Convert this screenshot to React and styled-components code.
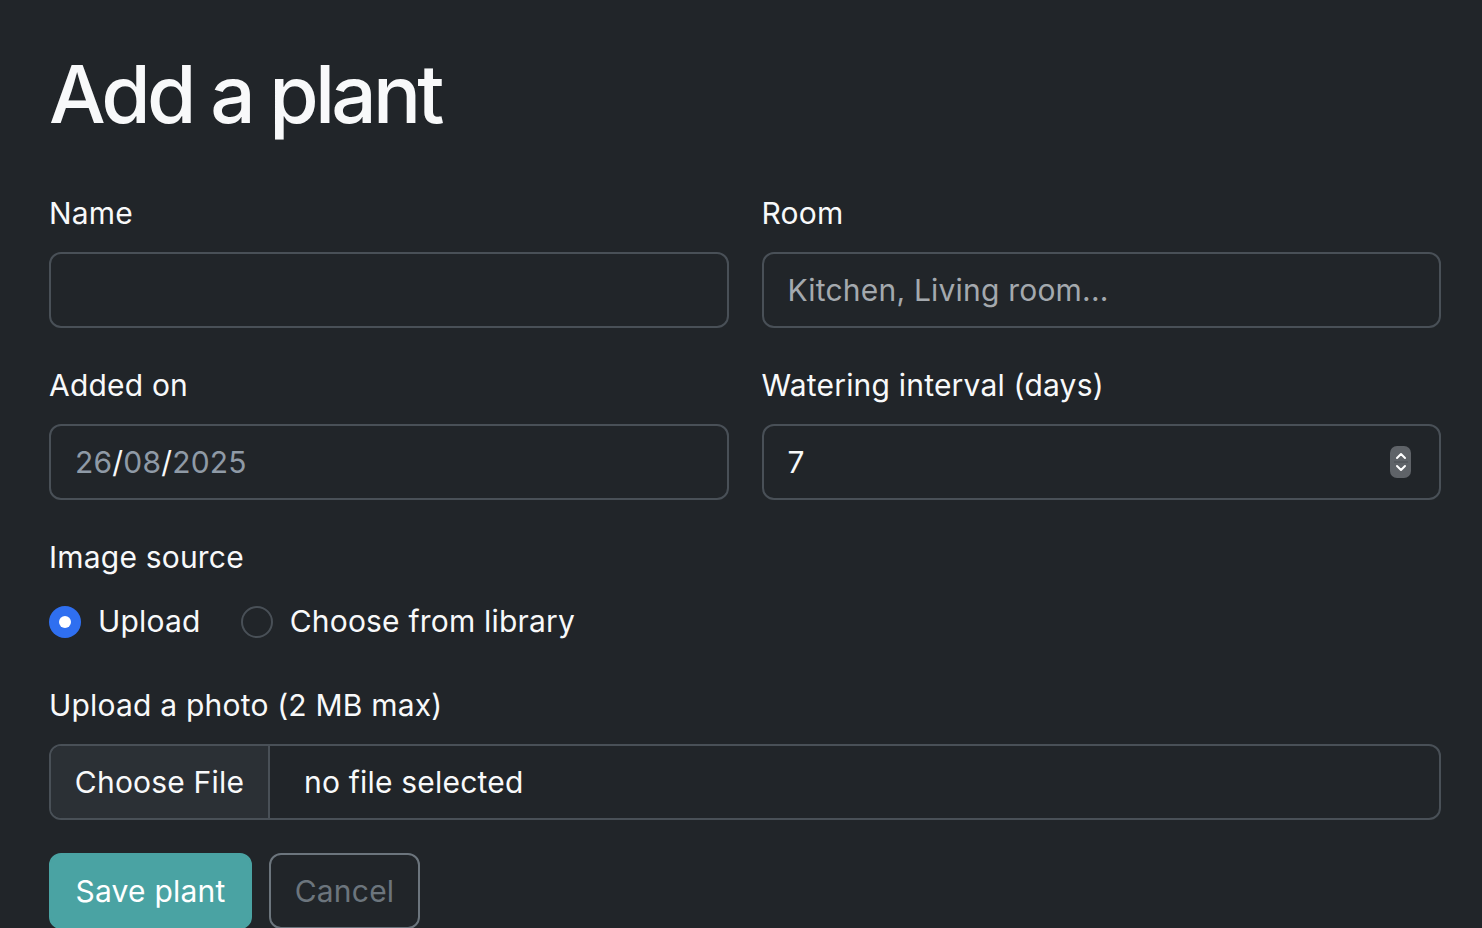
import React from "react";
import styled, { createGlobalStyle } from "styled-components";

const Global = createGlobalStyle`
  html, body { margin: 0; padding: 0; background: #212529; }
  body { font-family: Inter, "Noto Sans", sans-serif; color: #dee2e6; }
  * { box-sizing: border-box; }
`;

const Page = styled.main`
  padding: 46px 41px 0 49px;
  min-height: 928px;
  overflow: hidden;
`;

const Title = styled.h1`
  margin: 0 0 49px;
  font-size: 80px;
  font-weight: 500;
  line-height: 96px;
  letter-spacing: -3.8px;
  color: #f8f9fa;
`;

const Grid = styled.div`
  display: grid;
  grid-template-columns: 1fr 1fr;
  column-gap: 33px;
  row-gap: 35px;
`;

const Field = styled.div`
  display: flex;
  flex-direction: column;
  grid-column: ${(p) => (p.$full ? "1 / -1" : "auto")};
`;

const Label = styled.label`
  font-size: 30px;
  line-height: 45px;
  margin-bottom: 16px;
  color: #f8f9fa;
  letter-spacing: 0.2px;
`;

const Control = styled.div`
  position: relative;
  height: 76px;
  border: 2px solid #495057;
  border-radius: 12px;
  background: #212529;
  display: flex;
  align-items: center;
  padding: 0 24px;
  font-size: 30px;
  color: #f8f9fa;
  letter-spacing: 0.2px;
`;

const Placeholder = styled.span`
  color: #a4a9ae;
`;

const DatePart = styled.span`
  color: #8f9aa6;
`;

const Slash = styled.span`
  color: #f8f9fa;
`;

const Spinner = styled.div`
  position: absolute;
  right: 28px;
  top: 50%;
  transform: translateY(-50%);
  width: 21px;
  height: 32px;
  border-radius: 7px;
  background: #5f6368;
  display: flex;
  flex-direction: column;
  align-items: center;
  justify-content: center;
`;

const RadioRow = styled.div`
  display: flex;
  align-items: center;
  gap: 40px;
  margin-top: 3px;
  margin-bottom: 4px;
`;

const RadioOption = styled.label`
  display: flex;
  align-items: center;
  gap: 17px;
  font-size: 30px;
  line-height: 45px;
  color: #f8f9fa;
  letter-spacing: 0.2px;
`;

const RadioDot = styled.span`
  width: 32px;
  height: 32px;
  border-radius: 50%;
  border: ${(p) => (p.$checked ? "none" : "2px solid #495057")};
  background: ${(p) => (p.$checked ? "#2f6ff0" : "transparent")};
  display: flex;
  align-items: center;
  justify-content: center;
  &::after {
    content: "";
    display: ${(p) => (p.$checked ? "block" : "none")};
    width: 12px;
    height: 12px;
    border-radius: 50%;
    background: #fff;
  }
`;

const FileControl = styled.div`
  height: 76px;
  border: 2px solid #495057;
  border-radius: 12px;
  display: flex;
  align-items: stretch;
  overflow: hidden;
  font-size: 30px;
  color: #f8f9fa;
  letter-spacing: 0.2px;
`;

const FileButton = styled.div`
  width: 219px;
  background: #2b3035;
  border-right: 2px solid #495057;
  display: flex;
  align-items: center;
  justify-content: center;
`;

const FileName = styled.div`
  display: flex;
  align-items: center;
  padding-left: 34px;
`;

const Actions = styled.div`
  display: flex;
  gap: 17px;
  margin-top: 33px;
`;

const Button = styled.button`
  height: 76px;
  padding: 0;
  border-radius: 12px;
  font-family: inherit;
  font-size: 30px;
  letter-spacing: 0.2px;
  border: 2px solid ${(p) => (p.$primary ? "#4aa3a3" : "#6c757d")};
  background: ${(p) => (p.$primary ? "#4aa3a3" : "transparent")};
  color: ${(p) => (p.$primary ? "#ffffff" : "#6c757d")};
  width: ${(p) => p.$w}px;
`;

export default function App() {
  return (
    <>
      <Global />
      <Page>
        <Title>Add a plant</Title>
        <Grid>
          <Field>
            <Label>Name</Label>
            <Control />
          </Field>
          <Field>
            <Label>Room</Label>
            <Control>
              <Placeholder>Kitchen, Living room...</Placeholder>
            </Control>
          </Field>
          <Field>
            <Label>Added on</Label>
            <Control>
              <DatePart>26</DatePart>
              <Slash>/</Slash>
              <DatePart>08</DatePart>
              <Slash>/</Slash>
              <DatePart>2025</DatePart>
            </Control>
          </Field>
          <Field>
            <Label>Watering interval (days)</Label>
            <Control>
              7
              <Spinner>
                <svg width="14" height="26" viewBox="0 0 14 26" fill="none">
                  <path d="M3 9 L7 5 L11 9" stroke="#ffffff" strokeWidth="2" strokeLinecap="round" strokeLinejoin="round" />
                  <line x1="0" y1="13" x2="14" y2="13" stroke="#4a4e52" strokeWidth="1" />
                  <path d="M3 17 L7 21 L11 17" stroke="#ffffff" strokeWidth="2" strokeLinecap="round" strokeLinejoin="round" />
                </svg>
              </Spinner>
            </Control>
          </Field>
          <Field $full>
            <Label>Image source</Label>
            <RadioRow>
              <RadioOption>
                <RadioDot $checked />
                Upload
              </RadioOption>
              <RadioOption>
                <RadioDot />
                Choose from library
              </RadioOption>
            </RadioRow>
          </Field>
          <Field $full>
            <Label>Upload a photo (2 MB max)</Label>
            <FileControl>
              <FileButton>Choose File</FileButton>
              <FileName>no file selected</FileName>
            </FileControl>
          </Field>
        </Grid>
        <Actions>
          <Button $primary $w={203}>Save plant</Button>
          <Button $w={151}>Cancel</Button>
        </Actions>
      </Page>
    </>
  );
}
